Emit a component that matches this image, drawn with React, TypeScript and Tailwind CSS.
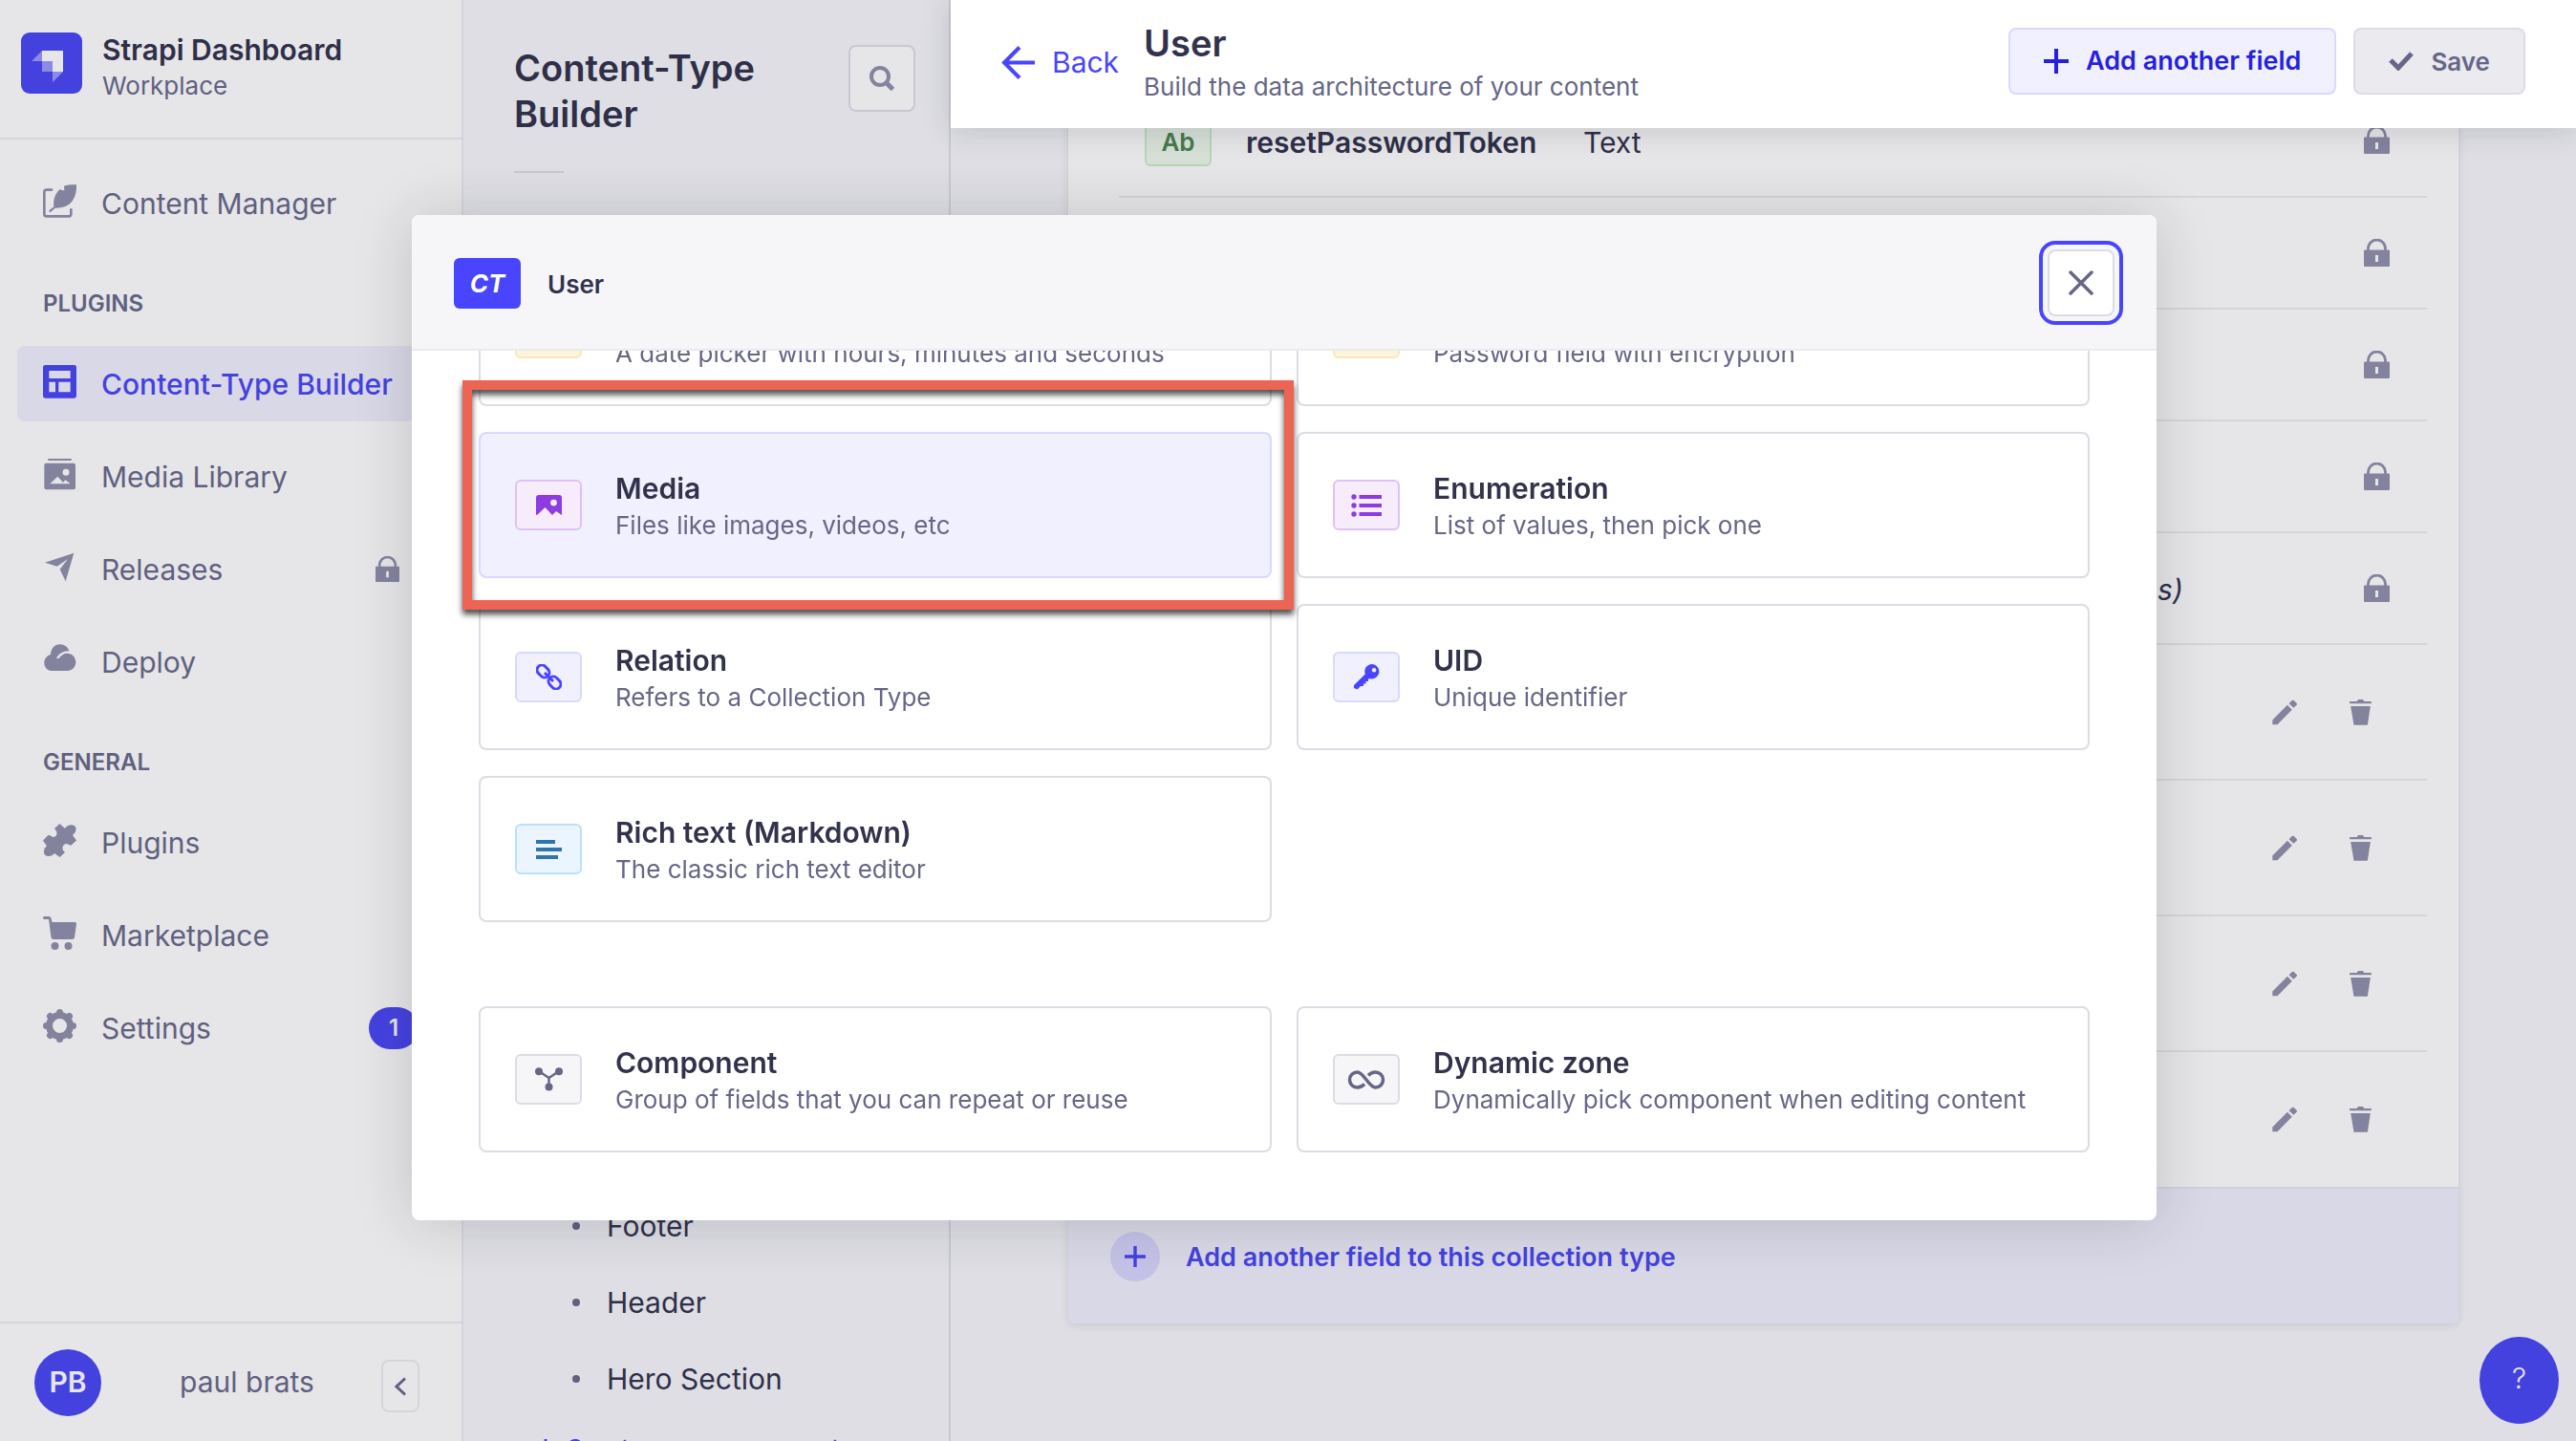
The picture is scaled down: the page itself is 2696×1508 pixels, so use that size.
import type { ReactNode } from "react";

type IconProps = { className?: string };

function LogoMark() {
  return (
    <svg viewBox="0 0 64 64" className="size-16 shrink-0" aria-hidden="true">
      <rect width="64" height="64" rx="9" fill="#4442df" />
      <path d="M22 19h22v22H33V30H22z" fill="#e6e6e8" />
      <path d="M22 30h11v11H22zM22 19v11H11zM33 41h11L33 52z" fill="#8c8ae4" />
    </svg>
  );
}

function WriteIcon() {
  return (
    <svg viewBox="0 0 105 105" className="size-[35px]" fill="none" aria-hidden="true">
      <path d="M27 17H11q-7 0-7 7v69q0 7 7 7h70q7 0 7-7V79" stroke="currentColor" strokeWidth="8" strokeLinecap="round" />
      <path d="M34 70C31 45 40 26 54 15l7 4 6-1-1-13C78 1 92 0 105 1c1 27-7 48-21 60-12 10-28 14-46 13L24 87q-5 1-5-5z" fill="currentColor" />
    </svg>
  );
}

function LayoutIcon() {
  return (
    <svg viewBox="0 0 105 105" className="size-[35px]" fill="currentColor" aria-hidden="true">
      <path fillRule="evenodd" d="M7 0h91q7 0 7 7v90q0 7-7 7H7q-7 0-7-7V7q0-7 7-7zm12 18v24h67V18zm0 35v32h20V53zm30 0v32h37V53z" />
    </svg>
  );
}

function GalleryIcon() {
  return (
    <svg viewBox="0 0 105 105" className="size-[35px]" fill="currentColor" aria-hidden="true">
      <rect x="15" y="3" width="75" height="6" rx="3" />
      <path fillRule="evenodd" d="M10 17h86q6 0 6 6v71q0 6-6 6H10q-6 0-6-6V23q0-6 6-6zm12 65h64L70 70l-7 8-17-19zm50-26a10.500 10.500 0 1 0 0-21 10.500 10.500 0 0 0 0 21z" />
    </svg>
  );
}

function PlaneIcon() {
  return (
    <svg viewBox="0 0 105 105" className="size-[35px]" fill="currentColor" aria-hidden="true">
      <path d="M97 8 6 38l38 12 34-23-25 32 18 38z" />
    </svg>
  );
}

function CloudIcon() {
  return (
    <svg viewBox="0 0 105 105" className="size-[35px]" fill="currentColor" aria-hidden="true">
      <path d="M30 87C14 87 4 76 4 62c0-13 8-22 20-26C25 16 38 4 53 4c14 0 26 9 29 21-18-1-31 8-40 22l7 2c8-11 16-17 27-17 15 0 27 12 27 28 0 15-12 27-27 27z" />
    </svg>
  );
}

function PuzzleIcon() {
  return (
    <svg viewBox="0 0 35 35" className="size-[35px]" fill="currentColor" aria-hidden="true">
      <path d="M17.500 0 23 5C26 0 34 0 34.500 5c.4 3-1.500 5-3.500 7l4 5.500-5 4.500c-2 2-2.500-1-6-1-4 1-5 6-1 9l-5.500 5L12 31c-3 4-11 4-11-1 0-4 1-5 3-6.500l-4-6 5-5c3-1.500 3 1.500 6 1.500 4-.5 4.500-5 2-7.500L12 5z" />
    </svg>
  );
}

function CartIcon() {
  return (
    <svg viewBox="0 0 35 35" className="size-[35px]" fill="currentColor" aria-hidden="true">
      <path d="M1.500 0H6q2 0 2.500 2l1 4H33q2 0 2 2l-2 14q-.4 2-2.500 2H11q-2 0-2.500-2L6 3H1.500Q0 3 0 1.500T1.500 0z" />
      <circle cx="12.500" cy="31" r="4" />
      <circle cx="26.500" cy="31" r="4" />
    </svg>
  );
}

function CogIcon() {
  return (
    <svg viewBox="0 0 35 35" className="size-[35px]" fill="none" stroke="currentColor" aria-hidden="true">
      <circle cx="17.500" cy="17.500" r="11" strokeWidth="7" />
      <path strokeWidth="7" strokeLinecap="round" d="M17.500 5V3.500M17.500 30v1.500M5 17.500H3.500M30 17.500h1.500M8.500 8.500l-1-1M26.500 26.500l1 1M8.500 26.500l-1 1M26.500 8.500l1-1" />
    </svg>
  );
}

function LockIcon({ className = "h-[30px] w-[27px]" }: IconProps) {
  return (
    <svg viewBox="0 0 27 30" className={className} aria-label="Locked" role="img">
      <path d="M4.500 13v-3a9 9 0 0 1 18 0v3" fill="none" stroke="currentColor" strokeWidth="2.800" />
      <path fillRule="evenodd" fill="currentColor" d="M1 11.500h25q1 0 1 1V28q0 1-1 1H1q-1 0-1-1V12.500q0-1 1-1zM12 17v7h3v-7z" />
    </svg>
  );
}

function PencilIcon() {
  return (
    <svg viewBox="0 0 80 81" className="h-[27px] w-[26px]" fill="currentColor" aria-hidden="true">
      <path d="M1 65 49 17l15 15-47 48H1zM54 12 64 2q3-2 6 0l9 9q2 3 0 6l-10 9z" />
    </svg>
  );
}

function TrashIcon() {
  return (
    <svg viewBox="0 0 68 81" className="h-[27px] w-[23px]" fill="currentColor" aria-hidden="true">
      <path d="M0 6h22l5-6h14l5 6h22v7H0zM3 21h62l-9 59H13z" />
    </svg>
  );
}

function SearchIcon() {
  return (
    <svg viewBox="0 0 26 26" className="size-[26px]" fill="none" stroke="currentColor" aria-hidden="true">
      <circle cx="11" cy="11" r="9" strokeWidth="4" />
      <path d="m17.500 17.500 7 7" strokeWidth="5" />
    </svg>
  );
}

function ArrowLeftIcon() {
  return (
    <svg viewBox="0 0 35 35" className="size-[35px]" fill="none" stroke="currentColor" strokeWidth="4" aria-hidden="true">
      <path d="M19 1.500 3 17.500l16 16M3 17.500h32" />
    </svg>
  );
}

function PlusIcon({ className = "size-[26px]" }: IconProps) {
  return (
    <svg viewBox="0 0 26 26" className={className} stroke="currentColor" strokeWidth="4" aria-hidden="true">
      <path d="M13 0v26M0 13h26" />
    </svg>
  );
}

function CheckIcon() {
  return (
    <svg viewBox="0 0 26 20" className="h-5 w-[26px]" fill="none" stroke="currentColor" strokeWidth="5" aria-hidden="true">
      <path d="m2 9 8 8L24 2" />
    </svg>
  );
}

function CrossIcon() {
  return (
    <svg viewBox="0 0 26 26" className="size-[26px]" stroke="currentColor" strokeWidth="3.500" strokeLinecap="round" aria-hidden="true">
      <path d="m2 2 22 22M24 2 2 24" />
    </svg>
  );
}

function ChevronLeftIcon() {
  return (
    <svg viewBox="0 0 12 20" className="h-5 w-3" fill="none" stroke="currentColor" strokeWidth="3" aria-hidden="true">
      <path d="m11 1.500-9 8.500 9 8.500" />
    </svg>
  );
}

function PictureIcon() {
  return (
    <svg viewBox="0 0 27 22" className="h-[22px] w-[27px]" fill="currentColor" aria-hidden="true">
      <path fillRule="evenodd" d="M3 0h21q3 0 3 3v18l-6-4-4 4-7.500-8L1 21q-1 0-1-1V3q0-3 3-3zm15.500 11.500a3.400 3.400 0 1 0 0-6.800 3.400 3.400 0 0 0 0 6.800z" />
    </svg>
  );
}

function ListIcon() {
  return (
    <svg viewBox="0 0 32 24" className="h-6 w-8" fill="currentColor" aria-hidden="true">
      <circle cx="3" cy="3" r="2.700" />
      <circle cx="3" cy="12" r="2.700" />
      <circle cx="3" cy="21" r="2.700" />
      <path d="M8.500 1H32v4H8.500zM8.500 10H32v4H8.500zM8.500 19H32v4H8.500z" />
    </svg>
  );
}

function LinkIcon() {
  return (
    <svg viewBox="0 0 27 27" className="size-[27px]" fill="none" stroke="currentColor" strokeWidth="3" aria-hidden="true">
      <rect x="0.500" y="2.500" width="14" height="10" rx="5" transform="rotate(45 7.500 7.500)" />
      <rect x="12.500" y="14.500" width="14" height="10" rx="5" transform="rotate(45 19.500 19.500)" />
      <path d="m9 9 9 9" />
    </svg>
  );
}

function KeyIcon() {
  return (
    <svg viewBox="0 0 27 27" className="size-[27px]" fill="currentColor" aria-hidden="true">
      <path fillRule="evenodd" d="M19 0a7.700 7.700 0 1 1-1.500 15.300L15 15.500V18h-2.500v2.500H10V23H7l-3.500 3.500L0 25v-3L11.800 10.500A7.700 7.700 0 0 1 19 0zm2 8.500a2.300 2.300 0 1 0 0-4.600 2.300 2.300 0 0 0 0 4.600z" />
    </svg>
  );
}

function ParagraphIcon() {
  return (
    <svg viewBox="0 0 27 20" className="h-5 w-[27px]" fill="currentColor" aria-hidden="true">
      <path d="M0 0h20v4H0zM0 8h27v4H0zM0 16h23v4H0z" />
    </svg>
  );
}

function ComponentIcon() {
  return (
    <svg viewBox="0 0 29 25" className="h-[25px] w-[29px]" fill="currentColor" aria-hidden="true">
      <path d="m4 4 10.500 7L25 4M14.500 11v9" fill="none" stroke="currentColor" strokeWidth="2.500" />
      <circle cx="4" cy="4.300" r="4" />
      <circle cx="25" cy="4.300" r="4" />
      <circle cx="14.500" cy="20.500" r="4" />
    </svg>
  );
}

function InfinityIcon() {
  return (
    <svg viewBox="0 0 40 20" className="h-5 w-10" fill="none" stroke="currentColor" strokeWidth="3.500" aria-hidden="true">
      <path d="M18 14.500c-2 2.200-4.500 3.500-7.500 3.500a8 8 0 0 1 0-16c7 0 12 16 19 16a8 8 0 0 0 0-16c-3 0-5.500 1.300-7.500 3.500" />
    </svg>
  );
}

function NavItem({ icon, label, active, trailing }: { icon: ReactNode; label: string; active?: boolean; trailing?: ReactNode }) {
  const tone = active ? "bg-[#d9d8e6] text-[#4442df] font-medium" : "text-[#60607f]";
  const iconTone = active ? "text-[#4442df]" : "text-[#83839e]";
  return (
    <li>
      <a href="#" aria-current={active ? "page" : undefined} className={`flex h-[79px] items-center rounded-lg px-[27px] text-[30px] ${tone}`}>
        <span className={`mb-1 mr-[26px] flex ${iconTone}`}>{icon}</span>
        <span className="flex-1 pt-[2px] whitespace-nowrap">{label}</span>
        {trailing}
      </a>
    </li>
  );
}

function NavHeading({ children }: { children: string }) {
  return <h2 className="mb-[26px] mt-12 pl-[27px] text-[24px] leading-9 font-semibold text-[#60607f]">{children}</h2>;
}

function Sidebar() {
  return (
    <aside className="flex w-[485px] shrink-0 flex-col border-r-2 border-[#d4d4dc] bg-[#e6e6e8]">
      <div className="flex h-[146px] items-start border-b-2 border-[#d4d4dc] pl-[22px] pt-[34px]">
        <LogoMark />
        <div className="ml-[21px]">
          <p className="text-[30px] leading-9 font-semibold text-[#2f2f48]">Strapi Dashboard</p>
          <p className="text-[26px] leading-10 text-[#60607f]">Workplace</p>
        </div>
      </div>
      <nav aria-label="Main" className="flex-1 px-[18px] pt-[27px]">
        <ul>
          <NavItem icon={<WriteIcon />} label="Content Manager" />
        </ul>
        <NavHeading>PLUGINS</NavHeading>
        <ul className="flex flex-col gap-[18px]">
          <NavItem icon={<LayoutIcon />} label="Content-Type Builder" active />
          <NavItem icon={<GalleryIcon />} label="Media Library" />
          <NavItem icon={<PlaneIcon />} label="Releases" trailing={<LockIcon className="mr-5 h-7 w-[25px] text-[#83839e]" />} />
          <NavItem icon={<CloudIcon />} label="Deploy" />
        </ul>
        <NavHeading>GENERAL</NavHeading>
        <ul className="flex flex-col gap-[18px]">
          <NavItem icon={<PuzzleIcon />} label="Plugins" />
          <NavItem icon={<CartIcon />} label="Marketplace" />
          <NavItem
            icon={<CogIcon />}
            label="Settings"
            trailing={<span className="flex h-11 w-[52px] items-center justify-center rounded-full bg-[#4442df] text-[24px] font-semibold text-[#e6e6e8]">1</span>}
          />
        </ul>
      </nav>
      <div className="flex h-[125px] items-center border-t-2 border-[#d4d4dc] pl-9 pr-11">
        <span className="flex size-[70px] items-center justify-center rounded-full bg-[#4442df] text-[30px] font-semibold text-[#e6e6e8]">PB</span>
        <span className="flex-1 pl-3 text-center text-[30px] text-[#60607f]">paul brats</span>
        <button type="button" aria-label="Collapse the navbar" className="mt-2 flex h-[55px] w-10 items-center justify-center rounded-lg border-2 border-[#d4d4dc] text-[#60607f]">
          <ChevronLeftIcon />
        </button>
      </div>
    </aside>
  );
}

function BuilderPanel() {
  const entries = ["Footer", "Header", "Hero Section"];
  return (
    <section className="flex w-[510px] shrink-0 flex-col overflow-hidden border-r-2 border-[#c8c8d2] bg-[#dedee4]">
      <div className="flex items-start justify-between pl-[53px] pr-[35px] pt-[47px]">
        <h2 className="w-[290px] text-[38px] leading-12 font-semibold text-[#2f2f48]">Content-Type Builder</h2>
        <button type="button" aria-label="Search" className="flex size-[70px] items-center justify-center rounded-lg border-2 border-[#c8c8d2] bg-[#e6e6e8] text-[#83839e]">
          <SearchIcon />
        </button>
      </div>
      <hr className="ml-[53px] mt-9 w-[52px] border-t-2 border-[#c8c8d2]" />
      <nav aria-label="Components" className="flex flex-1 flex-col justify-end">
        <ul className="pl-[114px]">
          {entries.map((entry) => (
            <li key={entry}>
              <a href="#" className="flex h-20 items-center gap-7 text-[30px] text-[#2f2f48]">
                <span className="size-2 rounded-full bg-[#60607f]" />
                {entry}
              </a>
            </li>
          ))}
        </ul>
        <div className="h-[25px] shrink-0 pl-[77px]">
          <a href="#" className="flex h-16 items-center gap-3 text-[26px] whitespace-nowrap text-[#4442df]">
            <PlusIcon className="size-[18px]" />
            Create new component
          </a>
        </div>
      </nav>
    </section>
  );
}

function PageHeader() {
  return (
    <header className="relative z-10 flex h-[134px] shrink-0 items-center bg-white px-[53px] shadow-[0_2px_30px_rgba(33,33,52,0.16)]">
      <a href="#" className="mr-[26px] flex items-center gap-[18px] pb-1 text-[30px] text-[#4945ff]">
        <ArrowLeftIcon />
        Back
      </a>
      <div className="flex-1">
        <h1 className="text-[38px] leading-11 font-semibold text-[#32324d]">User</h1>
        <p className="pt-1 text-[26px] leading-10 text-[#666687]">Build the data architecture of your content</p>
      </div>
      <div className="flex gap-[18px] pb-[6px]">
        <button type="button" className="flex h-[70px] items-center gap-[18px] rounded-lg border-2 border-[#d9d8ff] bg-[#f0f0ff] px-[35px] text-[27px] font-semibold text-[#271fe0]">
          <PlusIcon />
          Add another field
        </button>
        <button type="button" disabled className="flex h-[70px] items-center gap-[18px] rounded-lg border-2 border-[#dcdce4] bg-[#eaeaef] px-[35px] text-[26px] font-semibold text-[#666687]">
          <CheckIcon />
          Save
        </button>
      </div>
    </header>
  );
}

const lockedFields: { badge: string; name: string; type: ReactNode }[] = [
  { badge: "Ab", name: "resetPasswordToken", type: "Text" },
  { badge: "Ab", name: "confirmationToken", type: "Text" },
  { badge: "", name: "confirmed", type: "Boolean" },
  { badge: "", name: "blocked", type: "Boolean" },
  { badge: "", name: "role", type: <>Relation with&nbsp;<em>Role (from: users-permissions)</em></> },
];

function FieldTable() {
  return (
    <div className="shrink-0 rounded-lg bg-[#e6e6e8] shadow-[0_2px_8px_rgba(33,33,52,0.12)]">
      <div className="pl-[53px] pr-[33px]">
        <table className="w-full border-collapse text-[30px] text-[#2f2f48]">
          <tbody>
            {lockedFields.map((field) => (
              <tr key={field.name} className="h-[117px] border-b-2 border-[#d4d4dc]">
                <td className="w-[133px] pl-[27px] pt-[2px]">
                  <span className="flex h-[52px] w-[70px] items-center justify-center rounded-md border-2 border-[#b5d5b5] bg-[#d6e0d6] text-[26px] font-semibold text-[#457a4b]">{field.badge}</span>
                </td>
                <td className="w-[353px] pt-1 font-semibold">{field.name}</td>
                <td className="pt-1 whitespace-nowrap">{field.type}</td>
                <td className="text-[#83839e]">
                  <div className="flex justify-end pr-[39px]"><LockIcon /></div>
                </td>
              </tr>
            ))}
            {[1, 2, 3, 4].map((row) => (
              <tr key={row} className="h-[142px] border-b-2 border-[#d4d4dc] last:border-b-0">
                <td colSpan={3} />
                <td className="text-[#83839e]">
                  <div className="flex justify-end gap-[55px] pr-[58px]">
                    <button type="button" aria-label="Edit field"><PencilIcon /></button>
                    <button type="button" aria-label="Delete field"><TrashIcon /></button>
                  </div>
                </td>
              </tr>
            ))}
          </tbody>
        </table>
      </div>
      <button type="button" className="flex h-[143px] w-full items-center gap-[27px] rounded-b-lg border-t-2 border-[#d0d0dc] bg-[#d9d8e6] pl-11 text-[27px] font-semibold text-[#4442df]">
        <span className="flex size-[52px] items-center justify-center rounded-full bg-[#c4c2e6]">
          <PlusIcon className="size-[22px]" />
        </span>
        <span className="pt-1">Add another field to this collection type</span>
      </button>
    </div>
  );
}

const tones = {
  yellow: "border-[#fae7b9] bg-[#fdf4dc] text-[#d9822f]",
  purple: "border-[#e0c1f4] bg-[#f6ecfc] text-[#8c3cdf]",
  blue: "border-[#d9d8ff] bg-[#f0f0ff] text-[#4945ff]",
  sky: "border-[#b8e1ff] bg-[#eaf5ff] text-[#2f74ad]",
  gray: "border-[#dcdce4] bg-[#f6f6f9] text-[#666687]",
};

function FieldCard({ title, text, tone, icon, selected }: { title: string; text: string; tone: keyof typeof tones; icon?: ReactNode; selected?: boolean }) {
  return (
    <div className="relative">
      <button
        type="button"
        className={`flex h-[153px] w-full items-center gap-[35px] rounded-lg border-2 pl-9 text-left ${selected ? "border-[#d9d8ff] bg-[#f0f0ff]" : "border-[#dcdce4] bg-white"}`}
      >
        <span className={`flex h-[53px] w-[70px] shrink-0 items-center justify-center rounded-md border-2 ${tones[tone]}`}>{icon}</span>
        <span className="flex flex-col pt-[2px]">
          <span className="text-[30px] leading-10 font-semibold text-[#32324d]">{title}</span>
          <span className="text-[26px] leading-[38px] text-[#666687]">{text}</span>
        </span>
      </button>
      {selected && (
        <div className="pointer-events-none absolute -bottom-[33px] -left-[17px] -right-[23px] -top-[54px] z-10 border-10 border-[#ec6453] drop-shadow-[0_5px_3px_rgba(0,0,0,0.7)]" />
      )}
    </div>
  );
}

function FieldPicker() {
  return (
    <div className="fixed inset-0 z-20 flex items-center justify-center pb-[6px] pr-2">
      <div role="dialog" aria-label="User" className="flex w-[1826px] max-w-full flex-col overflow-hidden rounded-lg bg-white shadow-[0_2px_60px_rgba(33,33,52,0.18)]">
        <div className="flex h-[142px] shrink-0 items-center border-b-2 border-[#eaeaef] bg-[#f6f6f9] px-11 pt-[2px]">
          <span className="flex h-[53px] w-[70px] items-center justify-center rounded-md bg-[#4945ff] text-[26px] font-bold text-white italic">CT</span>
          <h2 className="ml-7 flex-1 pt-[2px] text-[26px] font-semibold text-[#32324d]">User</h2>
          <button
            type="button"
            aria-label="Close the modal"
            className="flex size-[70px] items-center justify-center rounded-lg border-2 border-[#dcdce4] bg-white text-[#666687] outline-4 outline-offset-5 outline-[#4945ff]"
          >
            <CrossIcon />
          </button>
        </div>
        <div className="flex h-[910px] flex-col justify-end overflow-hidden px-[70px] pb-[71px]">
          <div className="grid shrink-0 grid-cols-2 gap-x-[26px] gap-y-[27px]">
            <FieldCard title="Date" text="A date picker with hours, minutes and seconds" tone="yellow" />
            <FieldCard title="Password" text="Password field with encryption" tone="yellow" />
            <FieldCard title="Media" text="Files like images, videos, etc" tone="purple" icon={<PictureIcon />} selected />
            <FieldCard title="Enumeration" text="List of values, then pick one" tone="purple" icon={<ListIcon />} />
            <FieldCard title="Relation" text="Refers to a Collection Type" tone="blue" icon={<LinkIcon />} />
            <FieldCard title="UID" text="Unique identifier" tone="blue" icon={<KeyIcon />} />
            <FieldCard title="Rich text (Markdown)" text="The classic rich text editor" tone="sky" icon={<ParagraphIcon />} />
          </div>
          <div className="mt-[88px] grid shrink-0 grid-cols-2 gap-x-[26px]">
            <FieldCard title="Component" text="Group of fields that you can repeat or reuse" tone="gray" icon={<ComponentIcon />} />
            <FieldCard title="Dynamic zone" text="Dynamically pick component when editing content" tone="gray" icon={<InfinityIcon />} />
          </div>
        </div>
      </div>
    </div>
  );
}

export default function App() {
  return (
    <div className="flex h-screen overflow-hidden bg-[#dedee4] font-['Inter',sans-serif]">
      <Sidebar />
      <BuilderPanel />
      <main className="flex min-w-0 flex-1 flex-col">
        <PageHeader />
        <div className="flex min-h-0 flex-1 flex-col justify-end overflow-hidden px-[123px] pb-[123px]">
          <FieldTable />
        </div>
      </main>
      <button type="button" aria-label="Help" className="fixed bottom-[18px] right-[18px] flex h-[91px] w-[83px] items-center justify-center rounded-[50%] bg-[#4442df] pb-1 text-[30px] font-light text-[#e6e6e8]">
        ?
      </button>
      <FieldPicker />
    </div>
  );
}
